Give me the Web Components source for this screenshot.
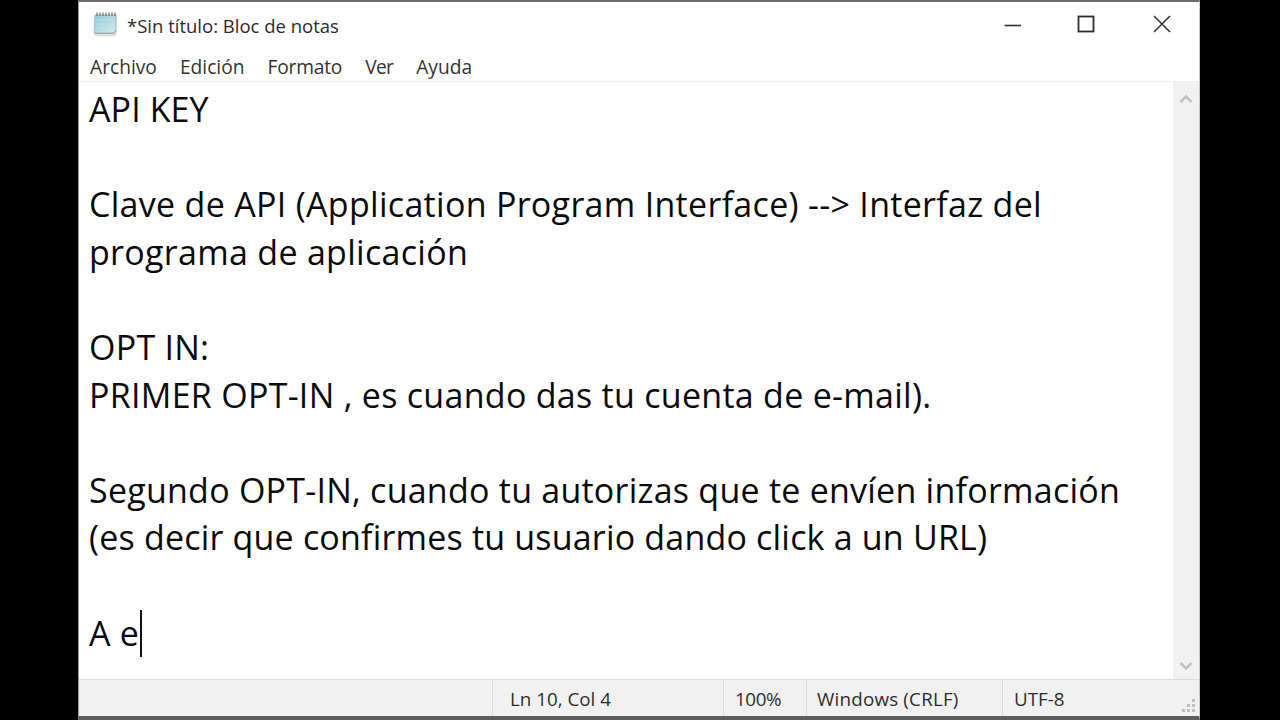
<!DOCTYPE html>
<html lang="es">
<head>
<meta charset="utf-8">
<title>Bloc de notas</title>
<style>
  html, body { margin: 0; height: 100%; background: #000; overflow: hidden; }
  body { display: flex; justify-content: center; font-family: "Open Sans", "Liberation Sans", sans-serif; }
</style>
</head>
<body>
<notepad-window>
  <np-titlebar slot="title">*Sin título: Bloc de notas</np-titlebar>
  <np-menubar slot="menu">
    <span>Archivo</span><span>Edición</span><span style="letter-spacing:-.2px">Formato</span><span style="letter-spacing:-.7px">Ver</span><span>Ayuda</span>
  </np-menubar>
  <np-editor slot="editor"></np-editor>
  <np-statusbar slot="status"></np-statusbar>
</notepad-window>

<script>
class NotepadWindow extends HTMLElement {
  constructor() {
    super();
    this.attachShadow({ mode: "open" });
    this.shadowRoot.innerHTML = `
    <style>
      :host {
        display: flex;
        flex-direction: column;
        width: 1122px;
        height: 720px;
        margin-left: -2px;
        box-sizing: border-box;
        background: #fff;
        border-top: 2px solid #6b6b6b;
        border-bottom: 4px solid #5c5c5c;
        border-left: 1px solid #9a9a9a;
        border-right: 1px solid #c4cacd;
      }
    </style>
    <slot name="title"></slot>
    <slot name="menu"></slot>
    <slot name="editor"></slot>
    <slot name="status"></slot>`;
  }
}

class NpTitlebar extends HTMLElement {
  constructor() {
    super();
    this.attachShadow({ mode: "open" });
    this.shadowRoot.innerHTML = `
    <style>
      :host {
        display: flex;
        align-items: center;
        height: 47px;
        flex: none;
        padding-left: 13px;
        font-size: 18.5px;
        color: #2b2b2b;
      }
      .app { width: 26px; height: 26px; margin-right: 9px; margin-top: -3px; flex: none; }
      .title { flex: 1; margin-top: -1px; }
      .ctl { width: 76px; display: flex; justify-content: center; align-items: center; margin-top: -3px; }
      .ctl svg { display: block; }
      .ctl.min svg { margin-left: 5px; }
      .ctl.close { margin-right: -1px; }
    </style>
    <svg class="app" viewBox="0 0 26 26">
      <defs>
        <linearGradient id="pg" x1="0" y1="0" x2="1" y2="1">
          <stop offset="0" stop-color="#8fc6d6"/>
          <stop offset="1" stop-color="#d3ecf1"/>
        </linearGradient>
      </defs>
      <path d="M6 5 H25 V23 L23 25.5 H6 L2 24 Z" fill="#dfe1de"/>
      <path d="M3 4 H24 L23.5 20 L21 22 H2 Z" fill="url(#pg)" stroke="#93b6c0" stroke-width=".8"/>
      <path d="M3 22.5 H21 L24 20" fill="none" stroke="#a8a8a4" stroke-width="1"/>
      <path d="M4 9 H22 M4 13 H22 M3.5 17 H22" stroke="#bfe0e7" stroke-width="1"/>
      <path d="M5 1.5 V5 M8 1.5 V5 M11 1.5 V5 M14 1.5 V5 M17 1.5 V5 M20 1.5 V5 M23 1.5 V5" stroke="#6c6c6c" stroke-width="1.2"/>
    </svg>
    <span class="title"><slot></slot></span>
    <div class="ctl min"><svg width="18" height="18" viewBox="0 0 18 18"><path d="M0.5 10.5 H17" stroke="#333" stroke-width="1.6"/></svg></div>
    <div class="ctl"><svg width="18" height="18" viewBox="0 0 18 18"><rect x="1.5" y="1.5" width="15" height="15" fill="none" stroke="#2c2c2c" stroke-width="1.8"/></svg></div>
    <div class="ctl close"><svg width="18" height="18" viewBox="0 0 18 18"><path d="M1 1 L17 17 M17 1 L1 17" stroke="#333" stroke-width="1.6"/></svg></div>`;
  }
}

class NpMenubar extends HTMLElement {
  constructor() {
    super();
    this.attachShadow({ mode: "open" });
    this.shadowRoot.innerHTML = `
    <style>
      :host {
        display: flex;
        align-items: center;
        gap: 23px;
        height: 33px;
        flex: none;
        padding: 1px 0 0 11px;
        box-sizing: border-box;
        font-size: 19.2px;
        color: #333;
        box-shadow: inset 0 -1px 0 #f0f0f0;
      }
    </style>
    <slot></slot>`;
  }
}

class NpEditor extends HTMLElement {
  constructor() {
    super();
    this.attachShadow({ mode: "open" });
    // second value: tracking per line, the reference font runs a bit different
    const lines = [
      ["API KEY", .1], [""],
      ["Clave de API (Application Program Interface) --> Interfaz del", .3],
      ["programa de aplicación", .3], [""],
      ["OPT IN:", .24],
      ["PRIMER OPT-IN , es cuando das tu cuenta de e-mail).", .28], [""],
      ["Segundo OPT-IN, cuando tu autorizas que te envíen información", .24],
      ["(es decir que confirmes tu usuario dando click a un URL)", .19], [""]
    ];
    const rows = lines.map(([l, s]) => `<div style="letter-spacing:${s || 0}px">${l || "&nbsp;"}</div>`).join("");
    this.shadowRoot.innerHTML = `
    <style>
      :host {
        display: flex;
        flex: 1;
        min-height: 0;
      }
      .text {
        flex: 1;
        padding: 4px 0 0 10px;
        font-size: 34px;
        letter-spacing: .24px;
        line-height: 47.6px;
        color: #0a0a0a;
        white-space: nowrap;
        overflow: hidden;
      }
      .caret { border-right: 2px solid #111; padding-right: 1px; display: inline-block; height: 47px; vertical-align: top; }
      .bar {
        width: 26px;
        background: #f1f1f1;
        display: flex;
        flex-direction: column;
        justify-content: space-between;
        align-items: center;
        padding: 12px 0 8px;
      }
      svg { display: block; }
    </style>
    <div class="text">${rows}<div><span class="caret">A e</span></div></div>
    <div class="bar">
      <svg width="14" height="10" viewBox="0 0 14 10"><path d="M1.5 8 L7 2.5 L12.5 8" fill="none" stroke="#c2c2c2" stroke-width="2.6"/></svg>
      <svg width="14" height="10" viewBox="0 0 14 10"><path d="M1.5 2 L7 7.5 L12.5 2" fill="none" stroke="#c2c2c2" stroke-width="2.6"/></svg>
    </div>`;
  }
}

class NpStatusbar extends HTMLElement {
  constructor() {
    super();
    this.attachShadow({ mode: "open" });
    this.shadowRoot.innerHTML = `
    <style>
      :host {
        display: flex;
        flex: none;
        height: 37px;
        box-sizing: border-box;
        background: #f1f1f1;
        border-top: 1px solid #dcdcdc;
        font-size: 18.8px;
        color: #2e2e2e;
        position: relative;
      }
      .cell { display: flex; align-items: center; padding-top: 2px; border-left: 1px solid #dadada; box-sizing: border-box; }
      .spacer { width: 413px; flex: none; }
      .grip { position: absolute; right: 3px; bottom: 3px; }
    </style>
    <div class="spacer"></div>
    <div class="cell" style="width:231px;padding-left:17px">Ln 10, Col 4</div>
    <div class="cell" style="width:83px;padding-left:11px;letter-spacing:-.4px">100%</div>
    <div class="cell" style="width:196px;padding-left:10px;letter-spacing:.2px">Windows (CRLF)</div>
    <div class="cell" style="flex:1;padding-left:11px">UTF-8</div>
    <svg class="grip" width="14" height="14" viewBox="0 0 14 14" fill="#c0c0c0">
      <rect x="10" y="0" width="3" height="3"/><rect x="5" y="5" width="3" height="3"/><rect x="10" y="5" width="3" height="3"/>
      <rect x="0" y="10" width="3" height="3"/><rect x="5" y="10" width="3" height="3"/><rect x="10" y="10" width="3" height="3"/>
    </svg>`;
  }
}

customElements.define("notepad-window", NotepadWindow);
customElements.define("np-titlebar", NpTitlebar);
customElements.define("np-menubar", NpMenubar);
customElements.define("np-editor", NpEditor);
customElements.define("np-statusbar", NpStatusbar);
</script>
</body>
</html>
